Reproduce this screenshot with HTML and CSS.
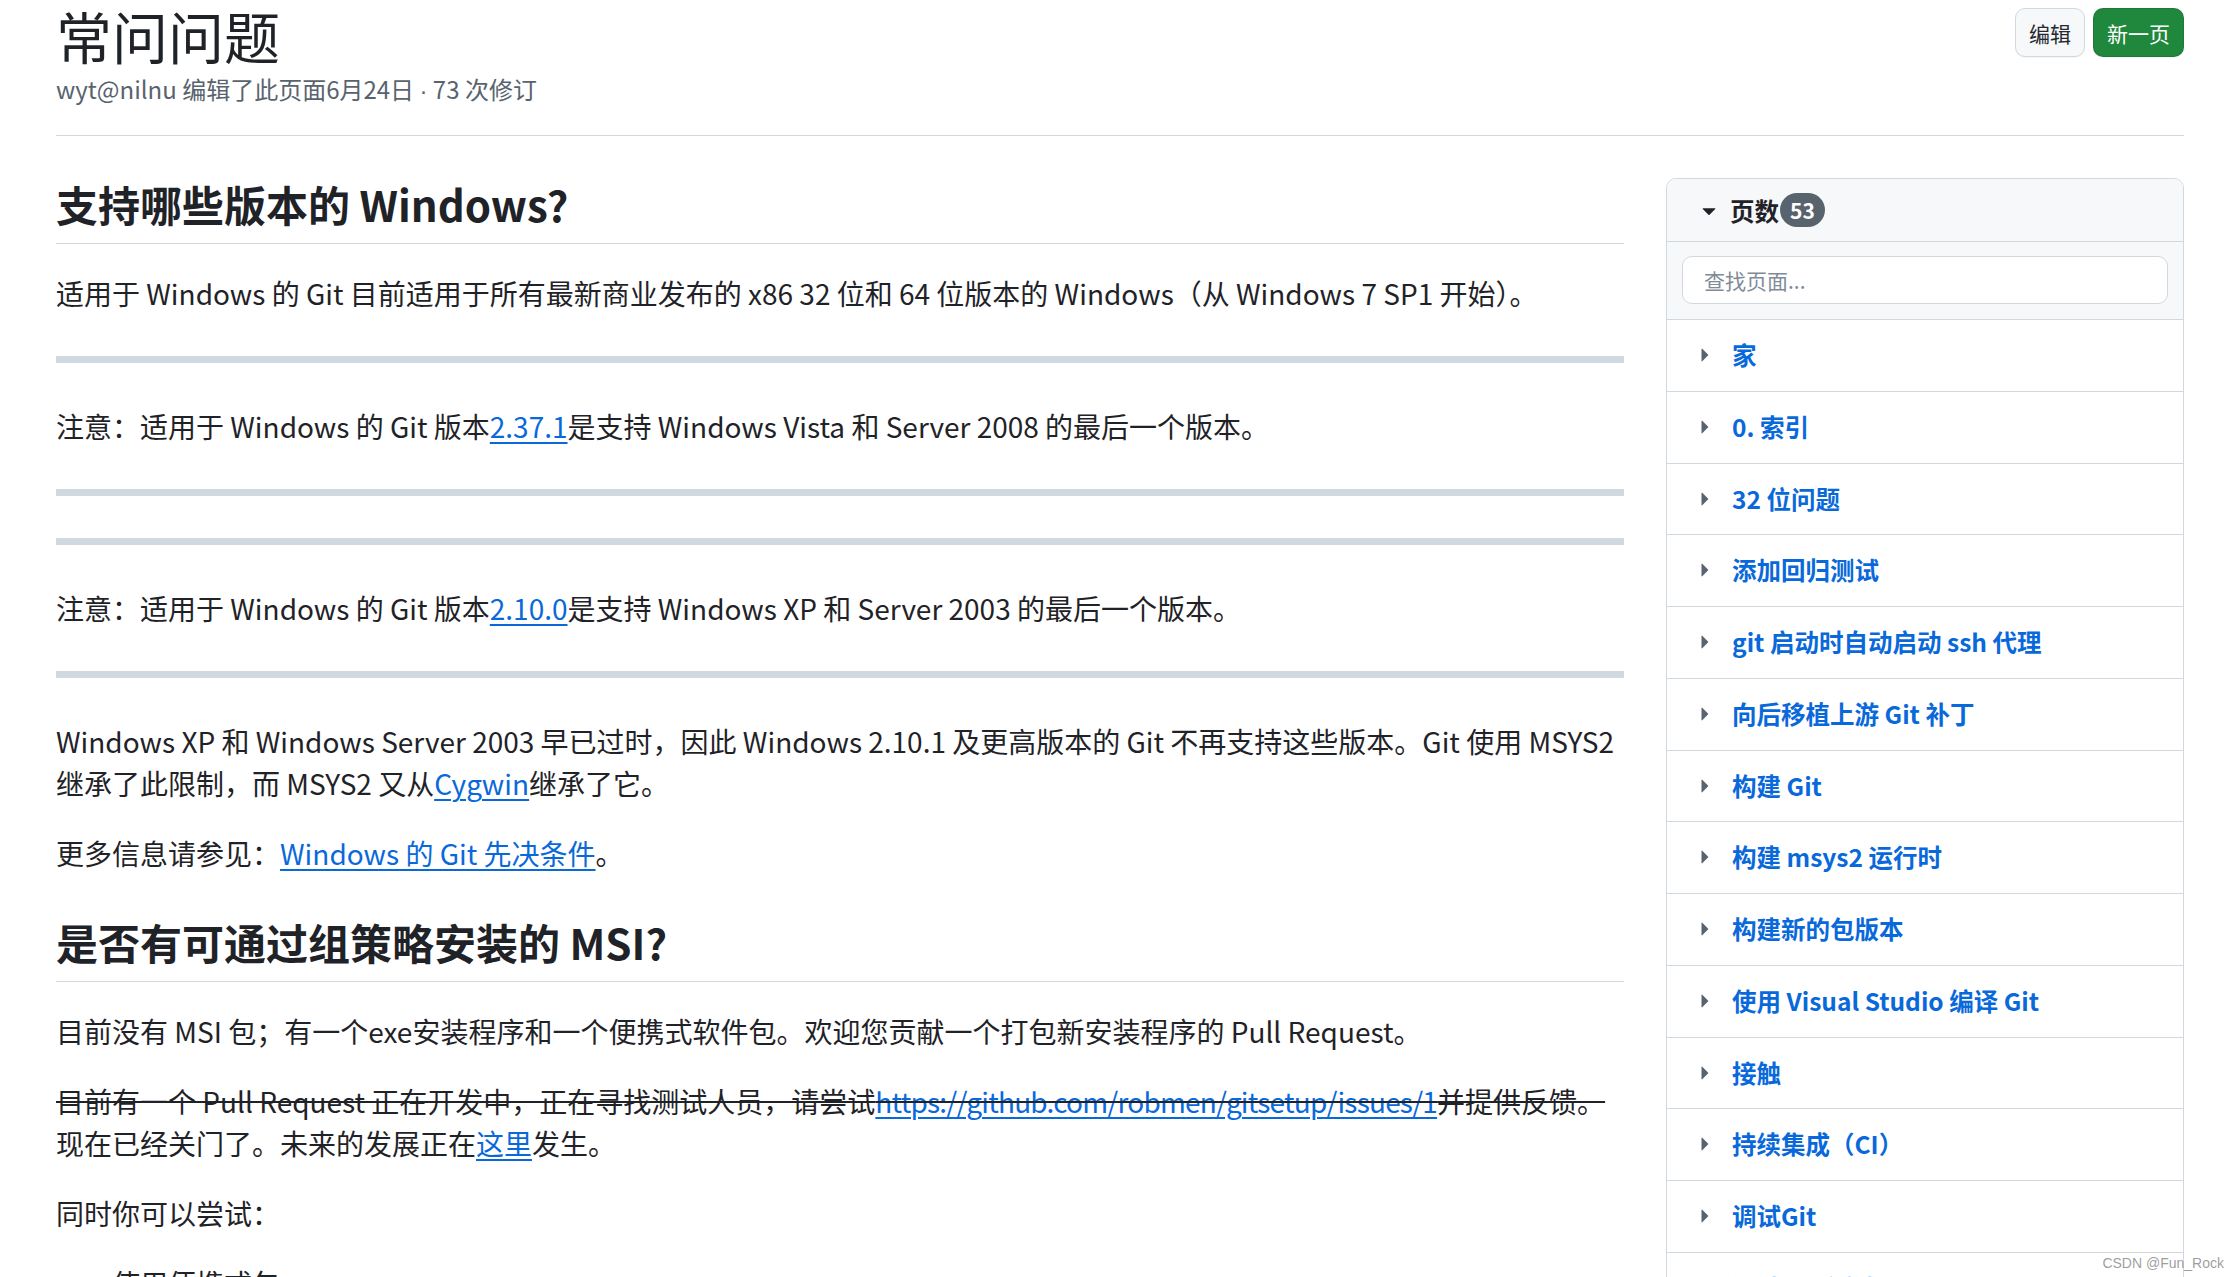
FILE: index.html
```html
<!DOCTYPE html>
<html lang="zh-CN">
<head>
<meta charset="utf-8">
<title>常问问题</title>
<link rel="stylesheet" href="styles.css">
</head>
<body>
<div class="container">
  <header class="page-head">
    <div class="head-text">
      <h1 class="page-title">常问问题</h1>
      <div class="page-meta">wyt@nilnu 编辑了此页面6月24日 <span class="dot">·</span> 73 次修订</div>
    </div>
    <div class="head-actions">
      <a class="btn" href="#">编辑</a>
      <a class="btn btn-primary" href="#">新一页</a>
    </div>
  </header>

  <div class="layout">
    <main class="markdown">
      <h2>支持哪些版本的 Windows?</h2>
      <p>适用于 Windows 的 Git 目前适用于所有最新商业发布的 x86 32 位和 64 位版本的 Windows（从 Windows 7 SP1 开始）。</p>
      <hr>
      <p>注意：适用于 Windows 的 Git 版本<a href="#">2.37.1</a>是支持 Windows Vista 和 Server 2008 的最后一个版本。</p>
      <hr>
      <hr>
      <p>注意：适用于 Windows 的 Git 版本<a href="#">2.10.0</a>是支持 Windows XP 和 Server 2003 的最后一个版本。</p>
      <hr>
      <p>Windows XP 和 Windows Server 2003 早已过时，因此 Windows 2.10.1 及更高版本的 Git 不再支持这些版本。Git 使用 MSYS2 继承了此限制，而 MSYS2 又从<a href="#">Cygwin</a>继承了它。</p>
      <p>更多信息请参见：<a href="#">Windows 的 Git 先决条件</a>。</p>
      <h2>是否有可通过组策略安装的 MSI?</h2>
      <p>目前没有 MSI 包；有一个exe安装程序和一个便携式软件包。欢迎您贡献一个打包新安装程序的 Pull Request。</p>
      <p><del>目前有一个 Pull Request 正在开发中，正在寻找测试人员，请尝试<a class="url-link" href="#">https://github.com/robmen/gitsetup/issues/1</a>并提供反馈。</del><br>现在已经关门了。未来的发展正在<a href="#">这里</a>发生。</p>
      <p>同时你可以尝试：</p>
      <ul>
        <li>使用便携式包</li>
        <li>使用静默安装参数</li>
      </ul>
    </main>

    <aside class="sidebar">
      <div class="pages-box">
        <div class="pages-header">
          <svg class="tri-down" viewBox="0 0 16 16" width="28" height="28" aria-hidden="true"><path d="m4.427 7.427 3.396 3.396a.25.25 0 0 0 .354 0l3.396-3.396A.25.25 0 0 0 11.396 7H4.604a.25.25 0 0 0-.177.427Z"/></svg>
          <span class="pages-label">页数</span>
          <span class="counter">53</span>
        </div>
        <div class="pages-search">
          <input class="search-input" type="text" placeholder="查找页面...">
        </div>
        <ul class="pages-list">
          <li><svg class="tri-right" viewBox="0 0 16 16" width="28" height="28"><path d="m6.427 4.427 3.396 3.396a.25.25 0 0 1 0 .354l-3.396 3.396A.25.25 0 0 1 6 11.396V4.604a.25.25 0 0 1 .427-.177Z"/></svg><a href="#">家</a></li>
          <li><svg class="tri-right" viewBox="0 0 16 16" width="28" height="28"><path d="m6.427 4.427 3.396 3.396a.25.25 0 0 1 0 .354l-3.396 3.396A.25.25 0 0 1 6 11.396V4.604a.25.25 0 0 1 .427-.177Z"/></svg><a href="#">0. 索引</a></li>
          <li><svg class="tri-right" viewBox="0 0 16 16" width="28" height="28"><path d="m6.427 4.427 3.396 3.396a.25.25 0 0 1 0 .354l-3.396 3.396A.25.25 0 0 1 6 11.396V4.604a.25.25 0 0 1 .427-.177Z"/></svg><a href="#">32 位问题</a></li>
          <li><svg class="tri-right" viewBox="0 0 16 16" width="28" height="28"><path d="m6.427 4.427 3.396 3.396a.25.25 0 0 1 0 .354l-3.396 3.396A.25.25 0 0 1 6 11.396V4.604a.25.25 0 0 1 .427-.177Z"/></svg><a href="#">添加回归测试</a></li>
          <li><svg class="tri-right" viewBox="0 0 16 16" width="28" height="28"><path d="m6.427 4.427 3.396 3.396a.25.25 0 0 1 0 .354l-3.396 3.396A.25.25 0 0 1 6 11.396V4.604a.25.25 0 0 1 .427-.177Z"/></svg><a href="#">git 启动时自动启动 ssh 代理</a></li>
          <li><svg class="tri-right" viewBox="0 0 16 16" width="28" height="28"><path d="m6.427 4.427 3.396 3.396a.25.25 0 0 1 0 .354l-3.396 3.396A.25.25 0 0 1 6 11.396V4.604a.25.25 0 0 1 .427-.177Z"/></svg><a href="#">向后移植上游 Git 补丁</a></li>
          <li><svg class="tri-right" viewBox="0 0 16 16" width="28" height="28"><path d="m6.427 4.427 3.396 3.396a.25.25 0 0 1 0 .354l-3.396 3.396A.25.25 0 0 1 6 11.396V4.604a.25.25 0 0 1 .427-.177Z"/></svg><a href="#">构建 Git</a></li>
          <li><svg class="tri-right" viewBox="0 0 16 16" width="28" height="28"><path d="m6.427 4.427 3.396 3.396a.25.25 0 0 1 0 .354l-3.396 3.396A.25.25 0 0 1 6 11.396V4.604a.25.25 0 0 1 .427-.177Z"/></svg><a href="#">构建 msys2 运行时</a></li>
          <li><svg class="tri-right" viewBox="0 0 16 16" width="28" height="28"><path d="m6.427 4.427 3.396 3.396a.25.25 0 0 1 0 .354l-3.396 3.396A.25.25 0 0 1 6 11.396V4.604a.25.25 0 0 1 .427-.177Z"/></svg><a href="#">构建新的包版本</a></li>
          <li><svg class="tri-right" viewBox="0 0 16 16" width="28" height="28"><path d="m6.427 4.427 3.396 3.396a.25.25 0 0 1 0 .354l-3.396 3.396A.25.25 0 0 1 6 11.396V4.604a.25.25 0 0 1 .427-.177Z"/></svg><a href="#">使用 Visual Studio 编译 Git</a></li>
          <li><svg class="tri-right" viewBox="0 0 16 16" width="28" height="28"><path d="m6.427 4.427 3.396 3.396a.25.25 0 0 1 0 .354l-3.396 3.396A.25.25 0 0 1 6 11.396V4.604a.25.25 0 0 1 .427-.177Z"/></svg><a href="#">接触</a></li>
          <li><svg class="tri-right" viewBox="0 0 16 16" width="28" height="28"><path d="m6.427 4.427 3.396 3.396a.25.25 0 0 1 0 .354l-3.396 3.396A.25.25 0 0 1 6 11.396V4.604a.25.25 0 0 1 .427-.177Z"/></svg><a href="#">持续集成（CI）</a></li>
          <li><svg class="tri-right" viewBox="0 0 16 16" width="28" height="28"><path d="m6.427 4.427 3.396 3.396a.25.25 0 0 1 0 .354l-3.396 3.396A.25.25 0 0 1 6 11.396V4.604a.25.25 0 0 1 .427-.177Z"/></svg><a href="#">调试Git</a></li>
          <li><svg class="tri-right" viewBox="0 0 16 16" width="28" height="28"><path d="m6.427 4.427 3.396 3.396a.25.25 0 0 1 0 .354l-3.396 3.396A.25.25 0 0 1 6 11.396V4.604a.25.25 0 0 1 .427-.177Z"/></svg><a href="#">调试 Git 测试</a></li>
        </ul>
      </div>
    </aside>
  </div>
</div>
<div class="watermark">CSDN @Fun_Rock</div>
</body>
</html>
```

FILE: styles.css
```css
html, body {
  margin: 0;
  padding: 0;
  height: 1277px;
  overflow: hidden;
  background: #ffffff;
}

body {
  font-family: "Noto Sans CJK SC", "Noto Sans", sans-serif;
  color: #1f2328;
}

a {
  color: #0969da;
}

.container {
  padding: 0 56px;
}

/* header */
.page-head {
  display: flex;
  justify-content: space-between;
  align-items: flex-start;
  padding-bottom: 28px;
  border-bottom: 1px solid #d1d9e0;
  margin-bottom: 42px;
}

.page-title {
  margin: 0;
  font-size: 56px;
  line-height: 70px;
  font-weight: 400;
  color: #1f2328;
}

.page-meta {
  height: 37px;
  font-size: 24px;
  line-height: 37px;
  color: #59636e;
}

.page-meta .dot {
  font-family: "Liberation Sans", Arial, sans-serif;
  line-height: 1;
}

.head-actions {
  display: flex;
  gap: 8px;
  margin-top: 8px;
}

.btn {
  display: inline-flex;
  align-items: center;
  height: 49px;
  box-sizing: border-box;
  padding: 0 13px;
  font-size: 21px;
  color: #25292e;
  text-decoration: none;
  background: #f6f8fa;
  border: 1px solid #d1d9e0;
  border-radius: 10px;
  box-shadow: 0 1px 0 rgba(31, 35, 40, 0.04);
}

.btn-primary {
  color: #ffffff;
  background: #1f883d;
  border-color: rgba(31, 35, 40, 0.15);
}

/* layout */
.layout {
  display: flex;
  gap: 42px;
  align-items: flex-start;
}

.markdown {
  flex: 0 0 1568px;
  width: 1568px;
  font-size: 28px;
  line-height: 1.5;
}

.markdown h2 {
  margin: 42px 0 28px;
  padding-bottom: 12.6px;
  font-size: 42px;
  line-height: 1.25;
  font-weight: 600;
  border-bottom: 1px solid #d1d9e0;
}

.markdown h2:first-child {
  margin-top: 0;
}

.markdown p {
  margin: 0 0 28px;
}

.markdown hr {
  height: 7px;
  margin: 42px 0;
  padding: 0;
  border: 0;
  background: #d1d9e0;
}

.markdown a {
  text-decoration: underline;
  text-decoration-thickness: 2px;
  text-underline-offset: 4px;
}

.markdown .url-link {
  letter-spacing: -0.8px;
}

.markdown del {
  text-decoration-thickness: 2px;
}

.markdown ul {
  margin: 0 0 28px;
  padding-left: 56px;
}

/* sidebar */
.sidebar {
  flex: 0 0 518px;
  width: 518px;
}

.pages-box {
  border: 1px solid #d1d9e0;
  border-radius: 10px;
  overflow: hidden;
}

.pages-header {
  display: flex;
  align-items: center;
  height: 62px;
  padding-left: 28px;
  background: #f6f8fa;
  border-bottom: 1px solid #d1d9e0;
}

.tri-down {
  fill: #1f2328;
  margin-right: 7px;
}

.pages-label {
  font-size: 24.5px;
  font-weight: 700;
  color: #1f2328;
}

.counter {
  display: inline-flex;
  align-items: center;
  height: 34px;
  padding: 0 10px;
  margin-left: 1px;
  font-size: 21px;
  font-weight: 700;
  color: #ffffff;
  background: #59636e;
  border-radius: 17px;
}

.pages-search {
  padding: 14px 15px 15px;
  background: #f6f8fa;
  border-bottom: 1px solid #d1d9e0;
}

.search-input {
  display: block;
  width: 100%;
  height: 48px;
  box-sizing: border-box;
  padding: 0 21px;
  font-family: inherit;
  font-size: 21px;
  color: #1f2328;
  background: #ffffff;
  border: 1px solid #d1d9e0;
  border-radius: 10px;
  outline: none;
}

.search-input::placeholder {
  color: #818b98;
}

.pages-list {
  list-style: none;
  margin: 0;
  padding: 0;
}

.pages-list li {
  display: flex;
  align-items: flex-start;
  padding: 17px 0 17px 24px;
  line-height: 36.75px;
  border-bottom: 1px solid #d1d9e0;
}

.tri-right {
  flex: 0 0 28px;
  fill: #59636e;
  margin-top: 4px;
  margin-right: 13px;
}

.pages-list a {
  font-size: 24.5px;
  font-weight: 700;
  color: #0969da;
  text-decoration: none;
}

.watermark {
  position: absolute;
  right: 16px;
  bottom: 6px;
  font-family: "Liberation Sans", Arial, sans-serif;
  font-size: 14px;
  color: rgba(140, 140, 140, 0.85);
}
```
